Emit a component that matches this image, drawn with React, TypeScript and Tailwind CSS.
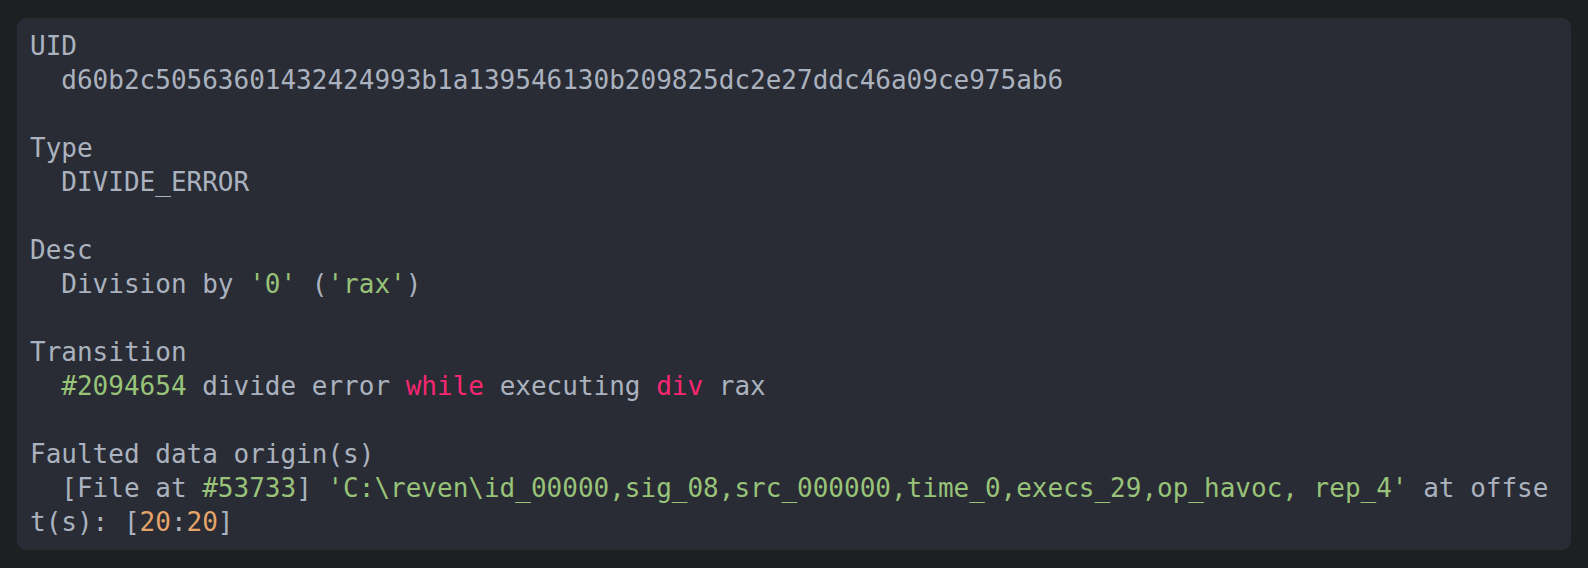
const green = 'text-[#98c379]'
const pink = 'text-[#f92672]'
const orange = 'text-[#e5a46a]'

export default function App() {
  return (
    <div className="min-h-[568px] bg-[#1e1f20] pl-[17px] pr-[17px] pt-[18px] pb-[18px]">
      <div className="rounded-[9px] bg-[#292c34] px-[13px] pt-[11px] pb-[11px]">
        <pre
          className="whitespace-pre-wrap break-all text-[26px] leading-[34px] text-[#abb2bf]"
          style={{ fontFamily: '"DejaVu Sans Mono", monospace' }}
        >
          {'UID\n  d60b2c50563601432424993b1a139546130b209825dc2e27ddc46a09ce975ab6\n\nType\n  DIVIDE_ERROR\n\nDesc\n  Division by '}
          <span className={green}>{"'0'"}</span>
          {' ('}
          <span className={green}>{"'rax'"}</span>
          {')\n\nTransition\n  '}
          <span className={green}>#2094654</span>
          {' divide error '}
          <span className={pink}>while</span>
          {' executing '}
          <span className={pink}>div</span>
          {' rax\n\nFaulted data origin(s)\n  [File at '}
          <span className={green}>#53733</span>
          {'] '}
          <span className={green}>{"'C:\\reven\\id_00000,sig_08,src_000000,time_0,execs_29,op_havoc, rep_4'"}</span>
          {' at offset(s): ['}
          <span className={orange}>20</span>
          {':'}
          <span className={orange}>20</span>
          {']'}
        </pre>
      </div>
    </div>
  )
}
